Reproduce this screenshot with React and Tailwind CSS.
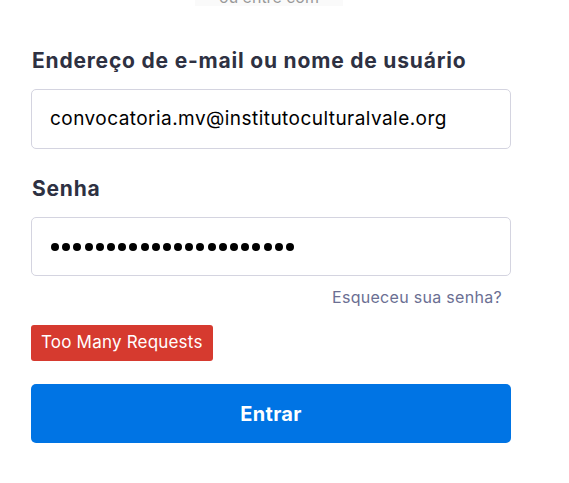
export default function App() {
  const dots = Array.from({ length: 22 });
  return (
    <div className="w-[569px] h-[483px] bg-white relative overflow-hidden" style={{ fontFamily: 'Inter, "Noto Sans", sans-serif' }}>
      <div className="absolute left-[195px] top-[-12px] w-[148px] h-[18px] bg-[#fafafa] flex justify-center">
        <span className="text-[16px] leading-[18px] text-[#999]">ou entre com</span>
      </div>
      <div className="pl-[31px] w-[511px] pt-[46px] flex flex-col">
        <label className="text-[21px] font-bold text-[#2e3142] leading-[30px] pl-[1px] tracking-[0.8px]">Endereço de e-mail ou nome de usuário</label>
        <div className="mt-[13px] h-[60px] border border-[#d4d4e0] rounded-[5px] flex items-center pl-[18px] text-[19px] tracking-[0.45px] text-black">
          convocatoria.mv@institutoculturalvale.org
        </div>
        <label className="mt-[25px] text-[21px] font-bold text-[#2e3142] leading-[30px] pl-[1px] tracking-[0.8px]">Senha</label>
        <div className="mt-[13px] h-[59px] border border-[#d4d4e0] rounded-[5px] flex items-center pl-[19px] gap-[3.2px]">
          {dots.map((_, i) => (
            <span key={i} className="w-[8px] h-[8px] rounded-full bg-black" />
          ))}
        </div>
        <div className="mt-[11px] flex justify-end pr-[9px] text-[16px] leading-[20px] tracking-[0.3px] text-[#6b6f93]">Esqueceu sua senha?</div>
        <div className="mt-[18px] flex">
          <span className="bg-[#d63a2f] text-white text-[17px] tracking-[0.2px] h-[36px] px-[10px] flex items-center rounded-[3px]">Too Many Requests</span>
        </div>
        <button className="mt-[23px] h-[59px] bg-[#0074e4] rounded-[5px] text-white text-[20px] font-bold tracking-[0.3px]">Entrar</button>
      </div>
    </div>
  );
}
